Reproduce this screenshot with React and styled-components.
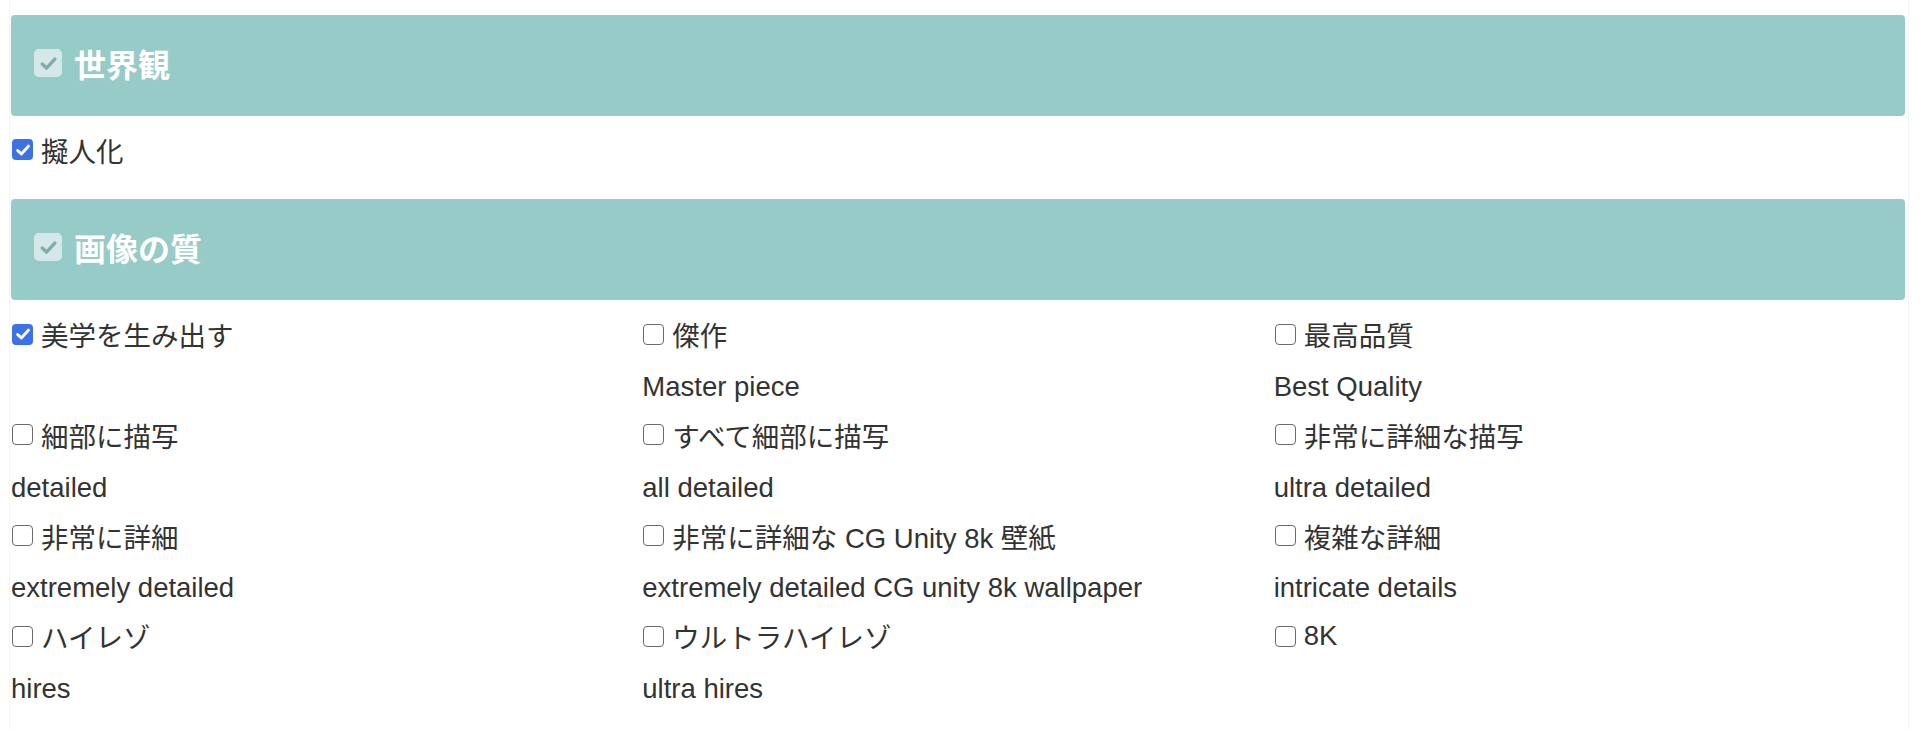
import React from "react";
import styled, { createGlobalStyle } from "styled-components";

const GlobalStyle = createGlobalStyle`
  html, body {
    margin: 0;
    padding: 0;
    background: #ffffff;
  }
  body {
    font-family: "Liberation Sans", "Noto Sans CJK JP", sans-serif;
    color: #333333;
  }
`;

const Page = styled.div`
  margin: 0 11px 0 9px;
  padding: 15px 3px 0 1px;
  border-left: 1px solid #f2f5fa;
  border-right: 1px solid #f2f5fa;
  min-height: 714px;
  box-sizing: border-box;
`;

const SectionBar = styled.div`
  height: 101px;
  box-sizing: border-box;
  background: #96cbc8;
  border-radius: 4px;
  display: flex;
  align-items: center;
  gap: 12px;
  padding: 0 0 5px 23px;
`;

const HeaderCheck = styled.span`
  width: 28px;
  height: 28px;
  border-radius: 5px;
  background: #d4e8e7;
  display: inline-flex;
  align-items: center;
  justify-content: center;
  flex: none;
`;

const SectionTitle = styled.h2`
  margin: 0;
  font-size: 32px;
  font-weight: 700;
  color: #ffffff;
  font-family: "Noto Sans CJK JP", "Liberation Sans", sans-serif;
  line-height: 1;
`;

const ItemGrid = styled.div`
  display: grid;
  grid-template-columns: repeat(${(p) => p.$cols}, 1fr);
  align-items: start;
  padding: 11px 0 22px;
`;

const Cell = styled.div`
  display: flex;
  flex-direction: column;
`;

const Label = styled.label`
  display: flex;
  align-items: center;
  height: 50.4px;
  box-sizing: border-box;
  padding-bottom: 5px;
  font-size: 27.5px;
  white-space: nowrap;
`;

const Box = styled.span`
  width: 21px;
  height: 21px;
  box-sizing: border-box;
  border-radius: 4px;
  margin: 0 8px 0 1px;
  flex: none;
  display: inline-flex;
  align-items: center;
  justify-content: center;
  background: ${(p) => (p.$checked ? "#3b73e6" : "#ffffff")};
  border: ${(p) => (p.$checked ? "none" : "1.8px solid #6b6b6b")};
`;

const English = styled.div`
  height: 50.4px;
  line-height: 50.4px;
  font-size: 27.5px;
  white-space: nowrap;
`;

const Check = ({ color, size, stroke }) => (
  <svg width={size} height={size} viewBox="0 0 16 16" fill="none">
    <path
      d="M3.2 8.4 L6.5 11.5 L12.8 4.6"
      stroke={color}
      strokeWidth={stroke}
      strokeLinecap="round"
      strokeLinejoin="round"
    />
  </svg>
);

const Checkbox = ({ checked }) => (
  <Box $checked={checked}>
    {checked && <Check color="#ffffff" size={18} stroke={2.6} />}
  </Box>
);

const sections = [
  {
    title: "世界観",
    items: [{ ja: "擬人化", checked: true }],
  },
  {
    title: "画像の質",
    items: [
      { ja: "美学を生み出す", checked: true },
      { ja: "傑作", en: "Master piece" },
      { ja: "最高品質", en: "Best Quality" },
      { ja: "細部に描写", en: "detailed" },
      { ja: "すべて細部に描写", en: "all detailed" },
      { ja: "非常に詳細な描写", en: "ultra detailed" },
      { ja: "非常に詳細", en: "extremely detailed" },
      { ja: "非常に詳細な CG Unity 8k 壁紙", en: "extremely detailed CG unity 8k wallpaper" },
      { ja: "複雑な詳細", en: "intricate details" },
      { ja: "ハイレゾ", en: "hires" },
      { ja: "ウルトラハイレゾ", en: "ultra hires" },
      { ja: "8K" },
    ],
  },
];

export default function App() {
  return (
    <>
      <GlobalStyle />
      <Page>
        {sections.map((s) => (
          <section key={s.title}>
            <SectionBar>
              <HeaderCheck>
                <Check color="#82aba9" size={21} stroke={2.6} />
              </HeaderCheck>
              <SectionTitle>{s.title}</SectionTitle>
            </SectionBar>
            <ItemGrid $cols={3}>
              {s.items.map((it) => (
                <Cell key={it.ja}>
                  <Label>
                    <Checkbox checked={!!it.checked} />
                    {it.ja}
                  </Label>
                  {it.en && <English>{it.en}</English>}
                </Cell>
              ))}
            </ItemGrid>
          </section>
        ))}
      </Page>
    </>
  );
}
